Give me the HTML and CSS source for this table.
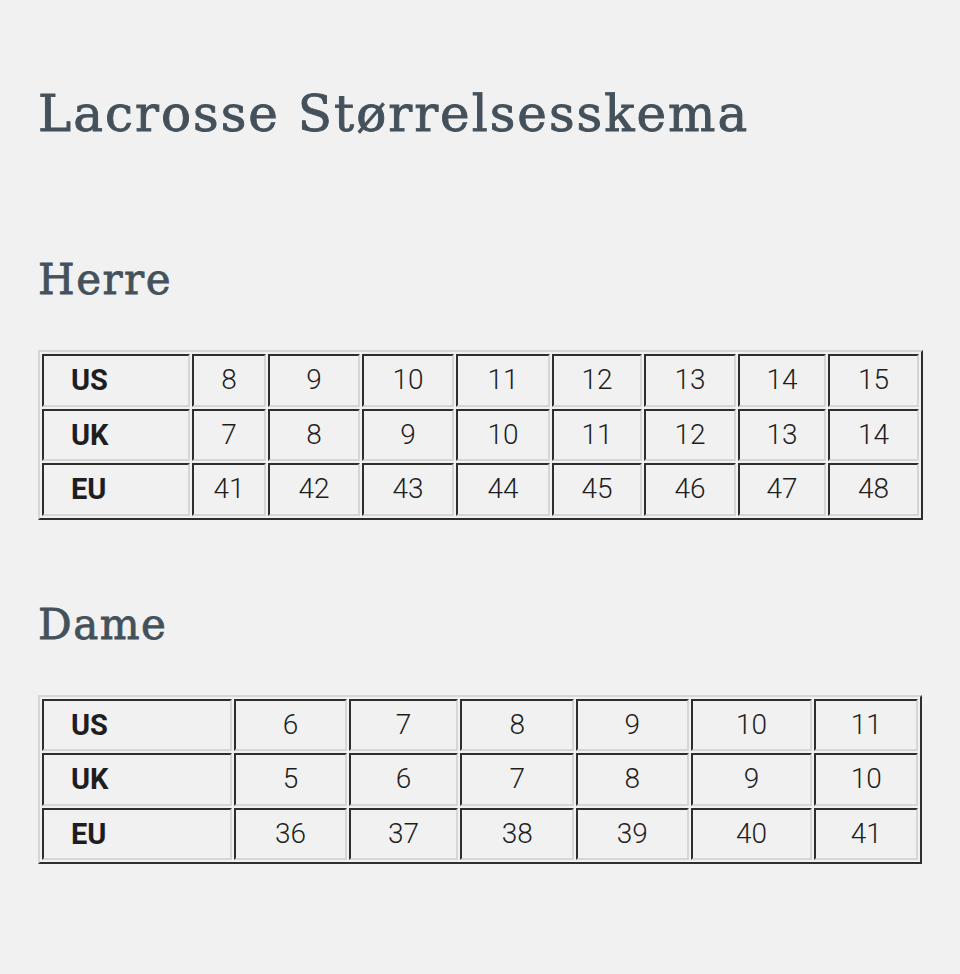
FILE: index.html
```html
<!DOCTYPE html>
<html lang="da">
<head>
<meta charset="utf-8">
<title>Lacrosse Størrelsesskema</title>
<link rel="stylesheet" href="styles.css">
</head>
<body>
<main class="page">
  <h1 class="title">Lacrosse Størrelsesskema</h1>

  <h2 class="section">Herre</h2>
  <table class="sizes men">
    <colgroup>
      <col class="m1"><col class="m2"><col class="m3"><col class="m4"><col class="m5"><col class="m6"><col class="m7"><col class="m8"><col class="m9">
    </colgroup>
    <tr><th>US</th><td>8</td><td>9</td><td>10</td><td>11</td><td>12</td><td>13</td><td>14</td><td>15</td></tr>
    <tr><th>UK</th><td>7</td><td>8</td><td>9</td><td>10</td><td>11</td><td>12</td><td>13</td><td>14</td></tr>
    <tr><th>EU</th><td>41</td><td>42</td><td>43</td><td>44</td><td>45</td><td>46</td><td>47</td><td>48</td></tr>
  </table>

  <h2 class="section second">Dame</h2>
  <table class="sizes women">
    <colgroup>
      <col class="w1"><col class="w2"><col class="w3"><col class="w4"><col class="w5"><col class="w6"><col class="w7">
    </colgroup>
    <tr><th>US</th><td>6</td><td>7</td><td>8</td><td>9</td><td>10</td><td>11</td></tr>
    <tr><th>UK</th><td>5</td><td>6</td><td>7</td><td>8</td><td>9</td><td>10</td></tr>
    <tr><th>EU</th><td>36</td><td>37</td><td>38</td><td>39</td><td>40</td><td>41</td></tr>
  </table>
</main>
</body>
</html>
```

FILE: styles.css
```css
html, body {
  margin: 0;
  padding: 0;
  background: #f1f1f1;
}

.page {
  width: 884px;
  padding: 84px 0 0 38px;
}

.title {
  margin: 0;
  font-family: "DejaVu Serif", "Liberation Serif", serif;
  font-weight: 400;
  font-size: 50px;
  letter-spacing: 2px;
  line-height: 60px;
  color: #44515b;
  -webkit-text-stroke: 0.9px #44515b;
}

.section {
  margin: 111px 0 0 0;
  font-family: "DejaVu Serif", "Liberation Serif", serif;
  font-weight: 400;
  font-size: 42px;
  letter-spacing: 1.5px;
  line-height: 50px;
  color: #44515b;
  -webkit-text-stroke: 0.8px #44515b;
}

.section.second {
  margin-top: 80px;
}

.sizes {
  margin-top: 45px;
  width: 884px;
  table-layout: fixed;
  border-collapse: separate;
  border-spacing: 2px;
  border: 2px solid;
  border-color: #d6d6d6 #2e2e2e #2e2e2e #d6d6d6;
  font-family: Roboto, "Liberation Sans", sans-serif;
  color: #1e1e1e;
}

.sizes th,
.sizes td {
  height: 48.5px;
  padding: 0;
  border: 2px solid;
  border-color: #2e2e2e #d6d6d6 #d6d6d6 #2e2e2e;
  font-size: 28px;
  line-height: 34px;
}

.sizes th {
  text-align: left;
  padding-left: 27px;
  font-weight: 700;
  font-size: 29px;
}

.sizes td {
  text-align: center;
  font-weight: 300;
}

.m1 { width: 148px; }
.m2 { width: 74px; }
.m3 { width: 92px; }
.m4 { width: 92px; }
.m5 { width: 94px; }
.m6 { width: 90px; }
.m7 { width: 92px; }
.m8 { width: 88px; }
.m9 { width: 91px; }

.w1 { width: 189px; }
.w2 { width: 112px; }
.w3 { width: 109px; }
.w4 { width: 113px; }
.w5 { width: 112px; }
.w6 { width: 121px; }
.w7 { width: 103px; }
```
